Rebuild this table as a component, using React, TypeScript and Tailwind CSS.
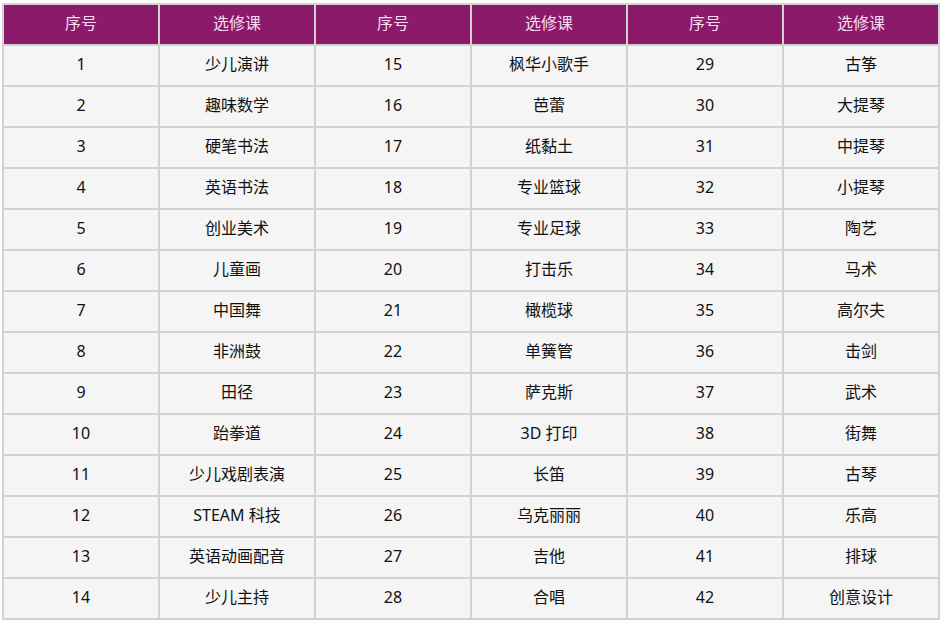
import React from "react";

const rows: [number, string, number, string, number, string][] = [
  [1, "少儿演讲", 15, "枫华小歌手", 29, "古筝"],
  [2, "趣味数学", 16, "芭蕾", 30, "大提琴"],
  [3, "硬笔书法", 17, "纸黏土", 31, "中提琴"],
  [4, "英语书法", 18, "专业篮球", 32, "小提琴"],
  [5, "创业美术", 19, "专业足球", 33, "陶艺"],
  [6, "儿童画", 20, "打击乐", 34, "马术"],
  [7, "中国舞", 21, "橄榄球", 35, "高尔夫"],
  [8, "非洲鼓", 22, "单簧管", 36, "击剑"],
  [9, "田径", 23, "萨克斯", 37, "武术"],
  [10, "跆拳道", 24, "3D 打印", 38, "街舞"],
  [11, "少儿戏剧表演", 25, "长笛", 39, "古琴"],
  [12, "STEAM 科技", 26, "乌克丽丽", 40, "乐高"],
  [13, "英语动画配音", 27, "吉他", 41, "排球"],
  [14, "少儿主持", 28, "合唱", 42, "创意设计"],
];

const headers = ["序号", "选修课", "序号", "选修课", "序号", "选修课"];

export default function App() {
  return (
    <div
      className="w-[944px] h-[625px] bg-white pl-[2px] pt-[3px]"
      style={{ fontFamily: '"Noto Sans", "Noto Sans CJK SC", sans-serif' }}
    >
      <div className="w-[938px] grid grid-cols-6 gap-[2px] p-[2px] bg-[#d2d2d2]">
        {headers.map((h, i) => (
          <div
            key={"h" + i}
            className="h-[39px] pb-[3px] bg-[#8c1a6b] text-[#f6dcef] text-[16px] flex items-center justify-center"
          >
            {h}
          </div>
        ))}
        {rows.map((r, ri) =>
          r.map((c, ci) => (
            <div
              key={ri + "-" + ci}
              className="h-[39px] pb-[3px] bg-[#f5f5f5] text-[#111111] text-[16px] flex items-center justify-center"
            >
              {c}
            </div>
          ))
        )}
      </div>
    </div>
  );
}
